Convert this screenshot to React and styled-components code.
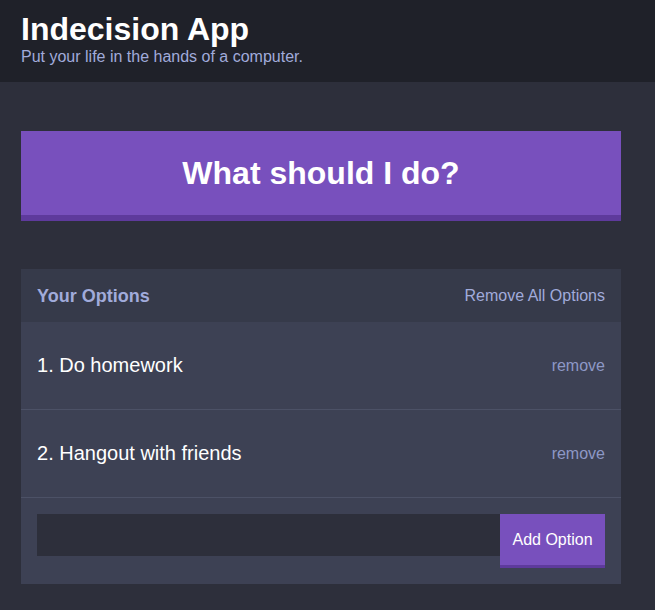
import React, { useState } from "react";
import styled, { createGlobalStyle } from "styled-components";

const GlobalStyle = createGlobalStyle`
  html, body {
    margin: 0;
    padding: 0;
    background: #2d2f3b;
    font-family: "Liberation Sans", Arial, Helvetica, sans-serif;
    color: #ffffff;
  }
  * {
    box-sizing: border-box;
  }
`;

const Header = styled.header`
  background: #1f2129;
  padding: 11px 0 16px;
`;

const Container = styled.div`
  width: 600px;
  margin: 0 0 0 21px;
`;

const Title = styled.h1`
  margin: 0;
  font-size: 32px;
  font-weight: 700;
  line-height: normal;
`;

const Subtitle = styled.h2`
  margin: 0;
  font-size: 16px;
  font-weight: 400;
  color: #a1abdb;
  line-height: normal;
`;

const Main = styled.main`
  padding: 49px 0 26px;
`;

const BigButton = styled.button`
  display: block;
  width: 100%;
  height: 90px;
  margin: 0 0 48px;
  padding: 0;
  border: none;
  border-bottom: 6px solid #5e3a9c;
  background: #7850bd;
  color: #ffffff;
  font-family: inherit;
  font-size: 32px;
  font-weight: 700;
  cursor: pointer;
`;

const Widget = styled.section`
  background: #3d4154;
`;

const WidgetHeader = styled.div`
  display: flex;
  align-items: center;
  justify-content: space-between;
  height: 53px;
  padding: 1px 16px 0;
  background: #363a4a;
`;

const WidgetTitle = styled.h3`
  margin: 0;
  font-size: 18px;
  font-weight: 700;
  color: #a1abdb;
`;

const LinkButton = styled.button`
  border: none;
  background: none;
  padding: 0;
  font-family: inherit;
  font-size: 16px;
  color: ${(p) => (p.$dim ? "#8e98c6" : "#a1abdb")};
  cursor: pointer;
`;

const Option = styled.div`
  display: flex;
  align-items: center;
  justify-content: space-between;
  height: 88px;
  padding: 0 16px;
  border-bottom: 1px solid #4c5166;
`;

const OptionText = styled.p`
  margin: 0;
  font-size: 20px;
  color: #ffffff;
`;

const Form = styled.form`
  display: flex;
  align-items: flex-start;
  padding: 16px;
`;

const Input = styled.input`
  flex: 1;
  height: 42px;
  border: none;
  background: #2d2f3b;
  color: #a1abdb;
  font-family: inherit;
  font-size: 16px;
  padding: 0 12px;
  outline: none;
`;

const AddButton = styled.button`
  width: 105px;
  height: 54px;
  padding: 0;
  border: none;
  border-bottom: 3px solid #5e3a9c;
  background: #7850bd;
  color: #ffffff;
  font-family: inherit;
  font-size: 16px;
  cursor: pointer;
`;

export default function App() {
  const [options, setOptions] = useState(["Do homework", "Hangout with friends"]);
  const [text, setText] = useState("");

  const onSubmit = (e) => {
    e.preventDefault();
    if (text.trim() !== "") {
      setOptions([...options, text.trim()]);
      setText("");
    }
  };

  return (
    <>
      <GlobalStyle />
      <Header>
        <Container>
          <Title>Indecision App</Title>
          <Subtitle>Put your life in the hands of a computer.</Subtitle>
        </Container>
      </Header>
      <Main>
        <Container>
          <BigButton>What should I do?</BigButton>
          <Widget>
            <WidgetHeader>
              <WidgetTitle>Your Options</WidgetTitle>
              <LinkButton onClick={() => setOptions([])}>Remove All Options</LinkButton>
            </WidgetHeader>
            {options.map((opt, i) => (
              <Option key={opt}>
                <OptionText>
                  {i + 1}. {opt}
                </OptionText>
                <LinkButton
                  $dim
                  onClick={() => setOptions(options.filter((o) => o !== opt))}
                >
                  remove
                </LinkButton>
              </Option>
            ))}
            <Form onSubmit={onSubmit}>
              <Input value={text} onChange={(e) => setText(e.target.value)} />
              <AddButton>Add Option</AddButton>
            </Form>
          </Widget>
        </Container>
      </Main>
    </>
  );
}
